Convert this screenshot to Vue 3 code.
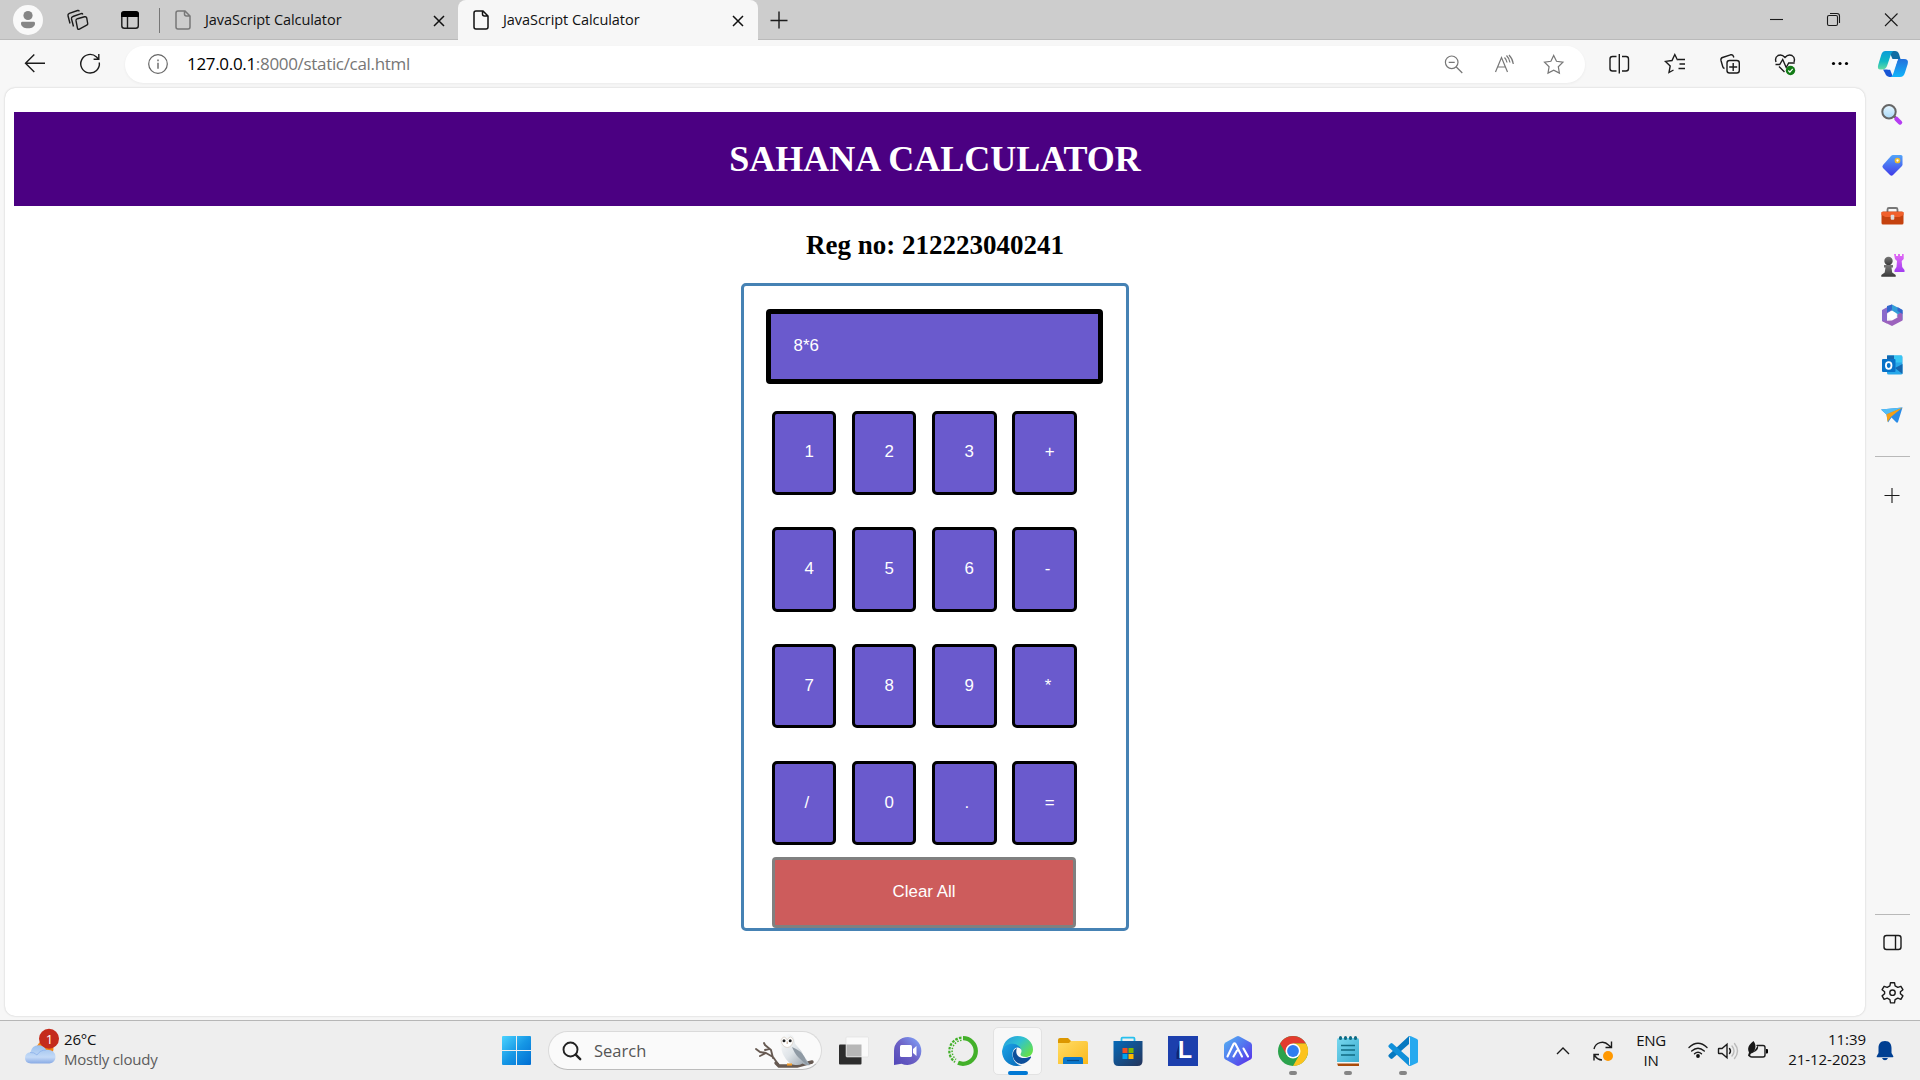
<script setup>
import { ref } from 'vue'

const display = ref('8*6')
const keys = ['1', '2', '3', '+', '4', '5', '6', '-', '7', '8', '9', '*', '/', '0', '.', '=']

function press(key) {
  if (key === '=') {
    const match = display.value.match(/^(-?[\d.]+)([-+*/])([\d.]+)$/)
    if (!match) return
    const a = Number(match[1])
    const b = Number(match[3])
    const results = { '+': a + b, '-': a - b, '*': a * b, '/': a / b }
    display.value = String(results[match[2]])
    return
  }
  display.value += key
}
</script>

<template>
  <div class="screen">
    <header class="tabstrip">
      <svg class="strip-tools" width="175" height="40" viewBox="0 0 175 40">
        <circle cx="28" cy="20" r="15" fill="#f9f9f9" />
        <circle cx="28" cy="15.5" r="4.6" fill="#868686" />
        <path d="M21 23.2q0-1.4 1.4-1.4h11.2q1.4 0 1.4 1.4c0 3.4-3 5.1-7 5.1s-7-1.700-7-5.100z" fill="#868686" />
        <g class="line">
          <path d="M77.500 18.700 84.500 16.800q1.800-.4 2.200 1l1 5.700q.2 1.200-1 1.700l-7.300 4q-1.500.6-1.900-.9l-1.500-7.600q-.2-1.500 1.500-2z" />
          <path d="M73.500 26.500 71.500 18.900q-.3-1.900 1.400-2.400l8.200-2.900q1.300-.3 1.700.9" />
          <path d="M70 23.500 68 15.800q-.4-1.700 1.300-2.400l8.300-2.900q1.300-.3 1.700.9" />
          <rect x="121.800" y="12.200" width="16.500" height="16" rx="2.500" />
          <path d="M127.500 16v12" />
        </g>
        <path d="M121 17v-3q0-3 3-3h12q3 0 3 3v3z" />
        <path d="M159.500 8v25" stroke="#777" />
      </svg>
      <div class="tab">
        <svg class="doc muted" width="16" height="20" viewBox="0 0 16 20"><path d="M3 1h7l5 5v11q0 2-2 2H3q-2 0-2-2V3q0-2 2-2zM9.500 1v3q0 2 2 2H15" /></svg>
        <span class="tab-title">JavaScript Calculator</span>
        <svg class="tab-close" width="12" height="12" viewBox="0 0 12 12"><path d="M1 1l10 10M11 1L1 11" /></svg>
      </div>
      <div class="tab active">
        <svg class="doc" width="16" height="20" viewBox="0 0 16 20"><path d="M3 1h7l5 5v11q0 2-2 2H3q-2 0-2-2V3q0-2 2-2zM9.500 1v3q0 2 2 2H15" /></svg>
        <span class="tab-title">JavaScript Calculator</span>
        <svg class="tab-close" width="12" height="12" viewBox="0 0 12 12"><path d="M1 1l10 10M11 1L1 11" /></svg>
      </div>
      <svg class="new-tab" width="18" height="18" viewBox="0 0 18 18"><path class="line" d="M9 .5v17M.5 9.500h17" /></svg>
      <svg class="window-controls" width="150" height="40" viewBox="1770 0 150 40">
        <g class="line thin">
          <path d="M1770 19.500h13" />
          <rect x="1827.500" y="15.500" width="10" height="10" rx="1.500" />
          <path d="M1830 13.500h7q2.500 0 2.500 2.500v7" />
          <path d="M1885 13.500l12.500 12.500M1897.500 13.500L1885 26" />
        </g>
      </svg>
    </header>

    <div class="toolbar">
      <svg class="nav" width="100" height="48" viewBox="10 40 100 48">
        <g class="line">
          <path d="M45 63.300H26M34.300 54.500L25.500 63.300l8.800 8.800" />
          <path d="M99.300 62.500A9.300 9.300 0 1 1 96.500 57l2 2M98.800 54v5.200h-5.200" />
        </g>
      </svg>
      <div class="address">
        <svg width="20" height="20" viewBox="0 0 20 20"><circle cx="10" cy="10" r="9.300" fill="none" stroke="#666" stroke-width="1.200" /><path d="M10 8.700v6M10 5.500v1.700" stroke="#666" stroke-width="1.400" /></svg>
        <span class="url"><b>127.0.0.1</b>:8000/static/cal.html</span>
        <svg class="address-tools" width="130" height="36" viewBox="1440 45 130 36">
          <g class="line soft">
            <circle cx="1451.700" cy="61.300" r="6.300" />
            <path d="M1456.300 66l6 6M1448.700 61.300h6" />
            <path d="M1495.500 71l6-14.500 6 14.500M1497.700 66h7.600M1504.500 56.500q2 2 2.500 5M1506.500 54.500q3 3 3.500 7M1509 54q3.500 3.500 4.300 9" />
            <path d="M1553.700 54.500l2.800 5.800 6.400.9-4.600 4.500 1.100 6.400-5.700-3-5.700 3 1.100-6.400-4.600-4.500 6.400-.9z" />
          </g>
        </svg>
      </div>
      <svg class="toolbar-icons" width="320" height="48" viewBox="1600 40 320 48">
        <defs>
          <linearGradient id="cp1" x1="0" y1="0" x2="0" y2="1"><stop stop-color="#0b9cd8" /><stop offset=".55" stop-color="#10b8c4" /><stop offset="1" stop-color="#65dca3" /></linearGradient>
          <linearGradient id="cp2" x1="0" y1="0" x2="0" y2="1"><stop stop-color="#2470dc" /><stop offset="1" stop-color="#12b5fa" /></linearGradient>
        </defs>
        <g class="line">
          <path d="M1616.500 56.500h-4q-2.500 0-2.500 2.500v9.500q0 2.500 2.500 2.500h4M1622 56.500h4q2.500 0 2.500 2.500v9.500q0 2.500-2.500 2.500h-4M1619.300 54v19.500" />
          <path d="M1673.500 70l-4.500 2.500 1.200-6.500-4.700-4.600 6.500-.9 2.800-6 2.800 5.700M1678 59.500h7M1679.500 64h5.500M1678.500 68.500h6.500" />
          <rect x="1727" y="60.500" width="12.300" height="12.500" rx="2.500" />
          <path d="M1733.200 63v8M1729.200 67h8M1724.500 68.500q-1.500-.5-1.800-2l-1.700-6q-.5-2.200 1.500-3l8-2.700q2.200-.6 2.900 1.500l.4 1.200" />
          <path d="M1776 62q-1.500-4.500 2-6.500 4-1.500 7 2 3-3.500 7-2 3.500 2 2 6.500M1775.500 64.500h4.200l3-5 3.500 8 2.500-4.500h6M1779 66.500l5.500 5.500" />
        </g>
        <circle cx="1790.500" cy="70.500" r="4.700" fill="#127b16" />
        <path d="M1788.300 70.500l1.600 1.700 2.800-3.300" fill="none" stroke="#fff" stroke-width="1.200" />
        <g><circle cx="1833.500" cy="63.500" r="1.600" /><circle cx="1840" cy="63.500" r="1.600" /><circle cx="1846.500" cy="63.500" r="1.600" /></g>
        <path d="M1889 51h6q3 0 4 3l1.500 5h-8z" fill="#116da4" />
        <path d="M1883 69.500h7l3 7.500h-3.500q-3.500-.5-4.500-4z" fill="#1755d5" />
        <path d="M1885.500 51h8q-2 1-2.800 4l-3.500 10.500q-1.300 4-5 4h-1.900q-3.300 0-2.100-4.500l3-10q1.100-4 4.300-4z" fill="url(#cp1)" />
        <path d="M1898 59h6q5 0 3.700 5l-2.700 8.500q-1.300 4.500-5 4.500h-9.500q2-.5 3-4l3-9.500q.8-3 1.500-4.500z" fill="url(#cp2)" />
        <path d="M1892 59h6l-2 5q-1.500 5.500-4.500 5.500h-4.200q1.500-1 2.200-3.500z" fill="#f7fbff" />
      </svg>
    </div>

    <div class="middle">
      <main class="page">
        <h1>SAHANA CALCULATOR</h1>
        <h2>Reg no: 212223040241</h2>
        <section class="calculator">
          <div class="display">{{ display }}</div>
          <div class="keys">
            <button v-for="key in keys" :key="key" class="key" @click="press(key)">{{ key }}</button>
          </div>
          <button class="clear" @click="display = ''">Clear All</button>
        </section>
      </main>

      <aside class="sidebar">
        <svg width="36" height="420" viewBox="1875 95 36 420">
          <defs>
            <linearGradient id="tag" x1="0" y1="0" x2="0" y2="1"><stop stop-color="#53a5fa" /><stop offset="1" stop-color="#403be8" /></linearGradient>
            <linearGradient id="rook" x1="0" y1="0" x2="0" y2="1"><stop stop-color="#e46bf5" /><stop offset="1" stop-color="#a13df0" /></linearGradient>
            <linearGradient id="pawn" x1="0" y1="0" x2="0" y2="1"><stop stop-color="#777" /><stop offset="1" stop-color="#3a3a3a" /></linearGradient>
            <linearGradient id="glass" x1="0" y1="0" x2="0" y2="1"><stop stop-color="#e8f7ff" /><stop offset="1" stop-color="#a9d9f8" /></linearGradient>
          </defs>
          <path d="M1894.500 116.500l2.500 2.500" stroke="#555" stroke-width="2" />
          <path d="M1896.500 119l3.500 3.500" stroke="#b53df2" stroke-width="4.500" stroke-linecap="round" />
          <circle cx="1889" cy="111.700" r="6.700" fill="url(#glass)" stroke="#666" stroke-width="2" />
          <path d="M1893 155h8q1.500 0 1.500 1.500v8q0 1-1 2l-8.500 8.500q-1.500 1.300-3 0l-7-7q-1.300-1.500 0-3l8-9q1-1 2-1z" fill="url(#tag)" />
          <circle cx="1897.500" cy="160.500" r="2" fill="#fff" stroke="#efbd2b" stroke-width="1.700" />
          <path d="M1887.500 212v-2.500q0-1.500 1.500-1.500h7q1.500 0 1.500 1.500v2.500" fill="none" stroke="#777" stroke-width="1.800" />
          <rect x="1881.500" y="211.500" width="22" height="13" rx="1.500" fill="#c5420f" />
          <path d="M1881.500 212h22v3l-4 2h-14l-4-2z" fill="#f1602b" />
          <rect x="1890.700" y="214.700" width="3.600" height="5" rx="1" fill="#ddd" />
          <path d="M1894 254h2v2h2v-2h2v2h2v-2h1.700v5l-2 2 .5 6 2.300 3v2h-10v-2l2-3 .5-6-2-2z" fill="url(#rook)" />
          <circle cx="1888.500" cy="261" r="4.200" fill="url(#pawn)" />
          <path d="M1884 265h9v2.500h-1.500l.7 5 3.500 2.500v1.700h-14.400V275l3.400-2.500.8-5H1884z" fill="url(#pawn)" />
          <path d="M1892 304.500l10.500 5.500v10l-5-3v-3l-5.500-3.500-5 2z" fill="#339ed8" />
          <path d="M1892 304.500l-10 5.500v11l5 2.500v-10l5-3.500z" fill="#8a6acb" />
          <path d="M1882 321l10 5 10.500-5.500v-9l-5 3v3l-5.500 3z" fill="#9c62bd" />
          <path d="M1897.500 311l5 3v-4l-5-3zM1887 306l5-1.500v5l-5 3z" fill="#3267cd" />
          <path d="M1892 311l4 2.200v4.600l-4 2.200-4-2.200v-4.600z" fill="#fff" />
          <rect x="1887" y="355.500" width="15.500" height="19" rx="1.500" fill="#28a8ea" />
          <path d="M1887 355.500h15v7h-15z" fill="#38c7f4" /><path d="M1887 355.500h7v7h-7zM1895 368l7.500-4v10z" fill="#1567af" />
          <rect x="1882" y="359" width="13.500" height="13" rx="1" fill="#0872c8" /><ellipse cx="1888.700" cy="365.500" rx="2.800" ry="3.300" fill="none" stroke="#fff" stroke-width="1.800" />
          <path d="M1881 409.500l21.500-2-4.500 14.500q-.6 1-1.500.5l-5-5-3.500 5-1.500-8z" fill="#298be7" />
          <path d="M1881 409.500l21.500-2-16 7z" fill="#53bdf5" /><path d="M1902.500 407.500l-16 6.800 1 7.700 3.300-5z" fill="#f5a016" />
          <path d="M1875 456.500h35" stroke="#b9b9b9" /><path class="line thin" d="M1892 488v15M1884.500 495.500h15" />
        </svg>
        <svg width="36" height="105" viewBox="1875 910 36 105">
          <path d="M1875 914.500h35" stroke="#b9b9b9" />
          <rect class="line" x="1884" y="935.500" width="17" height="14" rx="2.500" /><path class="line" d="M1895.500 935.500v14" />
          <path class="line" d="M1890.500 982.700h4l.6 3.200 2.700 1.500 3.100-1.100 2 3.400-2.500 2.100v2l2.500 2.100-2 3.400-3.100-1.100-2.700 1.500-.6 3.200h-4l-.6-3.200-2.700-1.500-3.100 1.100-2-3.400 2.500-2.100v-2l-2.500-2.100 2-3.400 3.100 1.100 2.700-1.500z" stroke-linejoin="round" />
          <circle class="line" cx="1892.500" cy="992.700" r="2.700" />
        </svg>
      </aside>
    </div>

    <footer class="taskbar">
      <div class="weather">
        <svg width="34" height="38" viewBox="25 1027 34 38">
          <defs><linearGradient id="cloud" x1="0" y1="0" x2="0" y2="1"><stop stop-color="#9ac0ee" /><stop offset=".65" stop-color="#c4daf7" /><stop offset="1" stop-color="#88aae4" /></linearGradient></defs>
          <circle cx="45" cy="1048" r="8.500" fill="#f28314" />
          <path d="M31 1062.500q-6-.5-6-5.500t5.500-5.700q1.500-6.800 8-7 5.500 0 7.500 4.500 9-.5 9.500 7 0 6-6 6.700z" fill="url(#cloud)" />
          <path d="M30 1051.500q4-.5 7 2.500 3-5 9-5" fill="none" stroke="#7ea7e7" stroke-opacity=".6" />
          <circle cx="49" cy="1037.700" r="10" fill="#c42b1c" />
          <text x="49.400" y="1042.500" text-anchor="middle" class="badge">1</text>
        </svg>
        <div class="weather-text"><div>26°C</div><div class="dim">Mostly cloudy</div></div>
      </div>

      <svg class="start" width="29" height="29" viewBox="0 0 29 29">
        <defs><linearGradient id="win" x1="0" y1="0" x2="1" y2="1"><stop stop-color="#4bd3ff" /><stop offset=".5" stop-color="#1697e5" /><stop offset="1" stop-color="#006dd2" /></linearGradient></defs>
        <path d="M1 0h13v14H0V1q0-1 1-1zM15 0h13q1 0 1 1v13H15zM0 15h14v14H1q-1 0-1-1zM15 15h14v13q0 1-1 1H15z" fill="url(#win)" />
      </svg>

      <div class="search">
        <svg width="20" height="20" viewBox="0 0 20 20" class="glass"><circle cx="8.500" cy="8.500" r="7" fill="none" stroke="#222" stroke-width="1.900" /><path d="M13.700 13.700l4.500 4.500" stroke="#222" stroke-width="2.400" stroke-linecap="round" /></svg>
        <span>Search</span>
        <svg class="owl" width="62" height="36" viewBox="754 1033 62 36">
          <defs><linearGradient id="owl" x1="0" y1="0" x2="1" y2="1"><stop stop-color="#fff" /><stop offset=".5" stop-color="#dfe4e8" /><stop offset="1" stop-color="#8f9ba5" /></linearGradient></defs>
          <g fill="none" stroke="#675a52" stroke-linecap="round" stroke-linejoin="round"><path d="M779 1064l-5-7-7-4-6-1-4-3M774 1058l-2-8-6-5M767 1053l-6 3M770 1049l-4 1M766 1045l-1-2" stroke-width="1.900" /><path d="M777 1063l3 3h18l15-4" stroke-width="3.400" /></g>
          <path d="M781 1041q1-7 7.500-7.500 6.500.5 7 7.500 0 3 3 5.500 4 4 6 9l6.500 9.500q-4 1-7.500-1.500-4 2.500-9 1-6-1.500-9.500-8.500-3-5-2.500-9-2-3-1.500-6z" fill="url(#owl)" />
          <path d="M793 1047q3 7 6 10 5 5 9.500 8l-3-8q-3-6-12.500-10z" fill="#8f9aa4" /><path d="M782 1040q3-6 6.200 0 3.200-6 6.200 0-1 7-6.200 7.500-5.200-.5-6.200-7.500z" fill="#fff" stroke="#d4cabf" stroke-width=".7" />
          <circle cx="785" cy="1040.800" r="1.500" fill="#222" /><circle cx="791.200" cy="1040.800" r="1.500" fill="#222" /><path d="M788.200 1041.500v2.500" stroke="#b79e86" />
          <path d="M788 1064.500h5" stroke="#ef9a2a" stroke-width="2.200" />
        </svg>
      </div>

      <nav class="apps">
        <div class="app">
          <svg width="30" height="30" viewBox="837 1035 30 30"><rect x="838" y="1043.500" width="22.500" height="20" rx="1" fill="#2d2d2d" /><rect x="845" y="1036" width="22.500" height="20" rx="1" fill="#fafafa" stroke="#dedede" stroke-width=".6" /><path d="M845.500 1043.500h15v12h-15z" fill="#b7b7b7" /></svg>
        </div>
        <div class="app">
          <svg width="30" height="30" viewBox="0 0 30 30"><defs><linearGradient id="chat" x1="0" y1="1" x2="1" y2="0"><stop stop-color="#5146b8" /><stop offset=".5" stop-color="#6d62c6" /><stop offset="1" stop-color="#83aaff" /></linearGradient></defs><path d="M15 1a14 14 0 1 1-6.500 26.700L1 29V15A14 14 0 0 1 15 1z" fill="url(#chat)" /><rect x="7" y="9" width="12" height="12" rx="1.500" fill="#fff" /><path d="M20 13l3.500-3v10L20 17z" fill="#fff" /></svg>
        </div>
        <div class="app">
          <svg width="30" height="30" viewBox="0 0 30 30"><circle cx="15" cy="15" r="12.800" fill="none" stroke="#43b02a" stroke-width="4.300" stroke-dasharray="45 40" transform="rotate(-90 15 15)" /><g fill="none" stroke="#43b02a"><path d="M13.500 1.700A13.400 13.400 0 0 0 7 26" stroke-width="2.200" stroke-dasharray="2.600 1.300" /><path d="M13.500 4.200A11 11 0 0 0 8 23.500" stroke-width="1.500" stroke-dasharray="1.500 1.500" /></g></svg>
        </div>
        <div class="app current">
          <svg width="31" height="30" viewBox="0 0 31 30"><defs><linearGradient id="e1" x1="0" y1="0" x2="1" y2=".7"><stop stop-color="#2496e0" /><stop offset=".5" stop-color="#2fc1d3" /><stop offset="1" stop-color="#65e04b" /></linearGradient><linearGradient id="e2" x1="0" y1="0" x2="1" y2="1"><stop stop-color="#1da5e8" /><stop offset="1" stop-color="#0665b5" /></linearGradient></defs><path d="M.5 13C2 5 8 0 15.500 0 24.500 0 31 6 31 13.500c0 5-3.500 7.500-7.500 7.500-3 0-5-1-5-2.500 0-1 1-1.700 1-3.500 0-3-3-5-6.500-5C7 10 2 13 .5 17z" fill="url(#e1)" /><path d="M.5 14C3 8.500 8 7.500 11 7.800c5.500.5 8.500 3.700 8.500 7.200 0-2-2-3.500-4-3.500-3 0-5 3-5 7 0 6 5 11.500 9.500 10.500-10 3.500-20-3-20-14z" fill="url(#e2)" /><path d="M15 12c-7 3-5 15 4 16 4 0 8-3 10-6.500.4-.8-.3-1.200-1-.8C19 24.500 12 20 15 12z" fill="#0d4f9b" /></svg>
          <i class="indicator wide"></i>
        </div>
        <div class="app">
          <svg width="30" height="30" viewBox="0 0 30 30"><defs><linearGradient id="folder" x1="0" y1="0" x2="1" y2="1"><stop stop-color="#ffdc66" /><stop offset="1" stop-color="#fbb91b" /></linearGradient></defs><path d="M0 4q0-2 2-2h8l3 3v7H0z" fill="#dc9700" /><path d="M0 7h11l2-2h15q2 0 2 2v21H0z" fill="url(#folder)" /><path d="M5 28v-5q0-2 2-2h16q2 0 2 2v5z" fill="#0b78cc" /><path d="M9 24.500h12" stroke="#064b88" stroke-width="1.200" /></svg>
        </div>
        <div class="app">
          <svg width="30" height="30" viewBox="0 0 30 30"><defs><linearGradient id="store" x1="0" y1="0" x2="1" y2="1"><stop stop-color="#066ab9" /><stop offset="1" stop-color="#25345a" /></linearGradient></defs><path d="M8.500 6V2.700q0-1 1-1h11q1 0 1 1V6" fill="none" stroke="#27c0ee" stroke-width="1.800" /><path d="M.5 5h29v20q0 5-5 5h-19q-5 0-5-5z" fill="url(#store)" /><path d="M9.500 12h5v5h-5z" fill="#f25022" /><path d="M15.500 12h5v5h-5z" fill="#7fba00" /><path d="M9.500 18h5v5h-5z" fill="#00a4ef" /><path d="M15.500 18h5v5h-5z" fill="#ffb900" /></svg>
        </div>
        <div class="app">
          <svg width="30" height="30" viewBox="0 0 30 30"><path d="M0 0h30v30H0z" fill="#1c3fad" /><path d="M11.500 6v17H8.500V17z" fill="#10276f" /><text x="10" y="22" class="letter">L</text></svg>
        </div>
        <div class="app">
          <svg width="30" height="30" viewBox="0 0 30 30"><defs><linearGradient id="hex" x1="0" y1="0" x2="1" y2="1"><stop stop-color="#55b6f2" /><stop offset=".5" stop-color="#5273ef" /><stop offset="1" stop-color="#5b27e8" /></linearGradient></defs><path d="M13.500.5q1.500-.8 3 0l11 6q1.500 1 1.500 2.500v12q0 1.500-1.500 2.500l-11 6q-1.500.8-3 0l-11-6Q1 22.500 1 21V9q0-1.500 1.500-2.500z" fill="url(#hex)" /><path d="M4.500 20.500L10.500 8q1-1.500 2 0l6.500 12.500M10.500 20.500l3.500-6M20.500 12.500l4.500 8" fill="none" stroke="#fff" stroke-width="2.100" stroke-linecap="round" stroke-linejoin="round" /></svg>
        </div>
        <div class="app">
          <svg width="30" height="30" viewBox="0 0 30 30"><circle cx="15" cy="15" r="15" fill="#2ba24c" /><path d="M2 7.500A15 15 0 0 1 28 7.500H15L8.500 18.700z" fill="#e33b2e" /><path d="M28 7.500A15 15 0 0 1 15 30l6.500-11.300L15 7.500z" fill="#fcc31e" /><circle cx="15" cy="15" r="7.500" fill="#fff" /><circle cx="15" cy="15" r="5.900" fill="#2f7df0" /></svg>
          <i class="indicator"></i>
        </div>
        <div class="app">
          <svg width="30" height="30" viewBox="0 0 30 30"><defs><linearGradient id="note" x1="0" y1="0" x2="1" y2="1"><stop stop-color="#78d8ef" /><stop offset="1" stop-color="#3cacd0" /></linearGradient></defs><path d="M4 27h22v3H5z" fill="#a94b0a" /><path d="M4 25h22v2.500H4z" fill="#f6f6f6" /><path d="M4 4q0-2 2-2h18q2 0 2 2v22H4z" fill="url(#note)" /><path d="M8 9.500h14M8 14h14M8 19h14" stroke="#116b83" stroke-width="1.700" /><path d="M7.500 1.500v1M12.500 1.500v1M17.500 1.500v1M22.500 1.500v1" stroke="#116b83" stroke-width="3" stroke-linecap="round" /></svg>
          <i class="indicator"></i>
        </div>
        <div class="app">
          <svg width="30" height="30" viewBox="0 0 30 30"><path d="M1 18.500L21 0v8L4.500 22.500q-1 .8-2 0L.7 20.700q-1-1 .3-2.200z" fill="#0779c0" /><path d="M1 11.500L21 30v-8L4.500 7.500q-1-.8-2 0L.7 9.300q-1 1 .3 2.200z" fill="#1090da" /><path d="M20.500.5Q21.500-.3 23 .3l6 2.700q1 .5 1 1.500v21q0 1-1 1.500l-6 2.700q-1.500.6-2.500-.2l1.500-1V1.500z" fill="#27a9ef" /></svg>
          <i class="indicator"></i>
        </div>
      </nav>

      <div class="tray">
        <svg width="60" height="30" viewBox="1555 1035 60 30">
          <path class="line" d="M1557 1053l6-6 6 6" />
          <path class="line" d="M1594 1048a8.500 8.500 0 0 1 14.500-4l3 2.500M1611.500 1040.500v6h-6M1602 1059a9 9 0 0 1-7-4l-1-2M1594 1059.500v-6h5" />
          <circle cx="1608" cy="1055" r="5" fill="#ff9800" />
        </svg>
        <div class="language"><div>ENG</div><div>IN</div></div>
        <svg class="status" width="84" height="24" viewBox="1686 1038 84 24">
          <g class="line" stroke-linecap="round">
            <path d="M1689 1046.500q9-8.500 18 0M1691.700 1050q6.300-5.500 12.600 0M1694.500 1052.700q3.500-3 7 0" />
            <path d="M1719 1047.500h3l5-4.300v13.600l-5-4.300h-3q-.5 0-.5-.5v-4q0-.5.500-.5zM1729.500 1047.500q2 2.500 0 5" />
            <path d="M1732 1045q4 5 0 10M1734.500 1042.500q6 7.500 0 15" stroke="#bbb" />
            <path d="M1757 1044.500h6q2 0 2 2v7.500q0 2-2 2h-11q-2.500 0-2.500-2" />
          </g>
          <circle cx="1698" cy="1055" r="1.900" fill="#111" /><path d="M1766 1048h1q1 0 1 1v2.500q0 1-1 1h-1z" />
          <path d="M1753.500 1040q3 4 1.500 8-1 4-4 4.500l-2 3-1-1 1-3q-2-4 .5-7.500 1.500-2 4-4z" fill="#171717" /><path d="M1758 1044.500q1 5-5 7z" fill="#171717" />
        </svg>
        <div class="clock"><div>11:39</div><div>21-12-2023</div></div>
        <svg class="bell" width="18" height="20" viewBox="0 0 18 20"><path d="M9 0c5 0 6.500 3.500 6.500 7v5l1.800 3.300q.3.900-.6.900H1.300q-.9 0-.6-.9L2.500 12V7C2.500 3.500 4 0 9 0zM6 17h6q-1 2.300-3 2.300T6 17z" fill="#003f92" /></svg>
      </div>
    </footer>
  </div>
</template>

<style>
html,
body {
  margin: 0;
  overflow: hidden;
}
</style>

<style scoped>
.screen {
  width: 1920px;
  height: 1080px;
  display: flex;
  flex-direction: column;
  overflow: hidden;
  background: #f7f7f7;
  color: #111;
  font-family: "Open Sans", "Noto Sans", sans-serif;
}
svg { display: block; flex: none; overflow: visible; }
.line { fill: none; stroke: #1b1b1b; stroke-width: 1.4; }
.thin { stroke-width: 1.1; }
.soft { stroke: #777; stroke-width: 1.2; }

.tabstrip {
  height: 40px;
  display: flex;
  align-items: center;
  background: #cdcdcd;
  box-shadow: inset 0 -1px #bababa;
}
.strip-tools { margin-right: -15px; }
.tab {
  box-sizing: border-box;
  width: 298px;
  height: 40px;
  display: flex;
  align-items: center;
  padding: 0 13px 0 15px;
}
.tab.active {
  width: 300px;
  padding-right: 14px;
  background: #f7f7f7;
  border-radius: 8px 8px 0 0;
}
.doc { fill: none; stroke: #111; stroke-width: 1.5; }
.doc.muted { stroke: #777; }
.tab-title { margin: 0 0 2px 14px; font-size: 14.500px; letter-spacing: -0.06px; white-space: nowrap; }
.tab-close { margin-left: auto; stroke: #111; stroke-width: 1.5; margin-top: 1px; }
.new-tab { margin-left: 12px; }
.window-controls { margin-left: auto; }

.toolbar { height: 48px; display: flex; align-items: center; }
.nav { margin: 0 15px 0 10px; }
.address {
  box-sizing: border-box;
  width: 1460px;
  height: 37px;
  display: flex;
  align-items: center;
  padding: 0 15px 0 23px;
  border-radius: 19px;
  background: #fff;
  box-shadow: 0 1px 3px #0000000d;
}
.url { margin: 0 0 2px 19px; font-size: 17px; letter-spacing: -0.32px; color: #767676; white-space: nowrap; }
.url b { font-weight: 400; color: #000; }
.address-tools { margin-left: auto; }
.toolbar-icons { margin-left: auto; }

.middle { height: 932px; display: flex; }
.page {
  box-sizing: border-box;
  width: 1860px;
  height: 928px;
  margin-left: 5px;
  padding: 24px 9px 0;
  background: #fff;
  border-radius: 10px;
  box-shadow: 0 0 2px #00000038;
}
h1, h2 { margin: 0; font-family: "Liberation Serif", "Times New Roman", serif; text-align: center; }
h1 { height: 94px; line-height: 94px; font-size: 36px; color: #fff; background: #4b0082; }
h2 { height: 77px; line-height: 79px; font-size: 27px; color: #000; }
.calculator {
  box-sizing: border-box;
  width: 388px;
  height: 648px;
  margin: 0 auto;
  border: 3px solid #4682b4;
  border-radius: 5px;
  padding: 23px 0 0 22px;
  font-family: "Liberation Sans", Arial, sans-serif;
  font-size: 16.875px;
  color: #fff;
}
.display {
  box-sizing: border-box;
  width: 337px;
  height: 75px;
  padding: 0 22.500px;
  line-height: 63px;
  border: 5px solid #000;
  border-radius: 4px;
  background: #6a5acd;
}
.keys {
  display: grid;
  grid-template-columns: repeat(4, 64.200px);
  grid-auto-rows: 84.300px;
  gap: 32.500px 15.920px;
  margin: 26.500px 0 0 6.200px;
}
.key, .clear { box-sizing: border-box; font: inherit; color: #fff; margin: 0; }
.key {
  padding: 0 0 1px 29.200px;
  text-align: left;
  border: 3px solid #000;
  border-radius: 5px;
  background: #6a5acd;
}
.clear {
  display: block;
  width: 304px;
  height: 71px;
  margin: 11.800px 0 0 6px;
  padding: 0;
  border: 3px solid #808080;
  border-radius: 4px;
  background: #cd5c5c;
}
.sidebar {
  width: 36px;
  height: 932px;
  margin-left: 10px;
  padding-top: 7px;
  box-sizing: border-box;
  display: flex;
  flex-direction: column;
  justify-content: space-between;
  padding-bottom: 5px;
}

.taskbar {
  box-sizing: border-box;
  height: 60px;
  display: flex;
  align-items: center;
  background: #eee;
  border-top: 1px solid #b6b6b6;
}
.weather { width: 477px; padding-left: 25px; display: flex; align-items: center; font-size: 15px; }
.weather svg { margin-top: -7px; }
.weather-text { margin: 0 0 4px 5px; line-height: 20px; letter-spacing: -0.2px; }
.dim { color: #5c5c5c; }
.badge { font-size: 13px; fill: #fff; }
.search {
  box-sizing: border-box;
  width: 274px;
  height: 39px;
  margin-left: 17px;
  padding: 0 6px 0 13px;
  display: flex;
  align-items: center;
  border: 1px solid #dadada;
  border-bottom-color: #bcbcbc;
  border-radius: 20px;
  background: #fafafa;
  font-size: 16.500px;
  color: #555;
}
.search span { margin: 0 0 1px 12px; }
.owl { margin-left: auto; }
.apps { display: flex; margin-left: 3px; }
.app { position: relative; width: 55.100px; height: 48px; display: flex; align-items: center; justify-content: center; }
.app svg { position: relative; }
.current::before {
  content: "";
  position: absolute;
  inset: 0 3px;
  border: 1px solid #e2e2e2;
  border-radius: 5px;
  background: #f8f8f8;
}
.indicator { position: absolute; bottom: 0; left: calc(50% - 4px); width: 8px; height: 4px; border-radius: 2px; background: #858585; }
.indicator.wide { left: calc(50% - 10px); width: 20px; background: #0078d4; }
.letter { font: bold 23px "Liberation Sans", sans-serif; fill: #fff; }
.tray { margin-left: auto; padding-right: 26px; display: flex; align-items: center; font-size: 15px; line-height: 20px; letter-spacing: -0.3px; }
.language { width: 40px; margin: 0 0 2px 16px; text-align: center; }
.status { margin-left: 15px; }
.clock { width: 96px; margin-bottom: 4px; text-align: right; white-space: nowrap; letter-spacing: -0.05px; }
.bell { margin-left: 10px; }
</style>
